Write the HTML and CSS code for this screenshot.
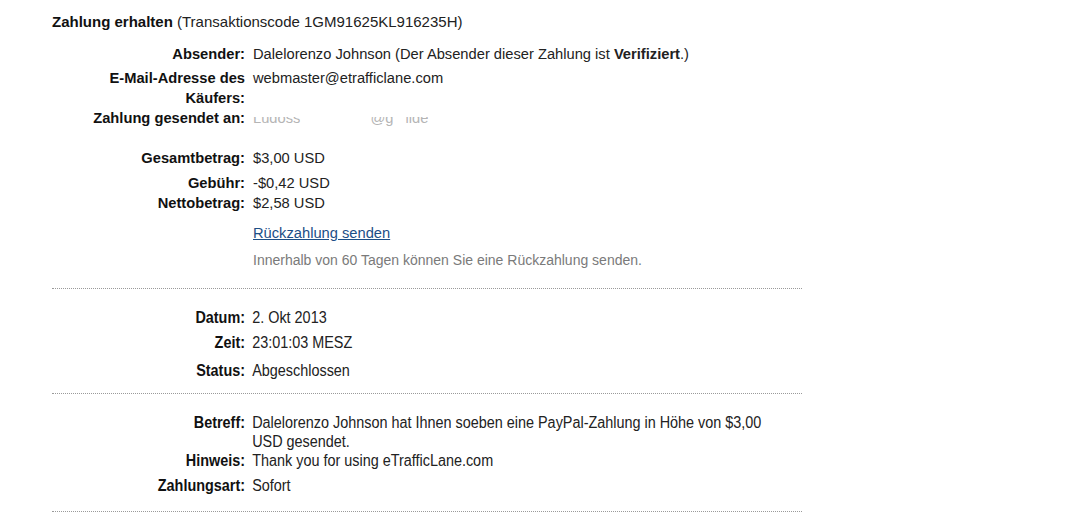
FILE: index.html
```html
<!DOCTYPE html>
<html lang="de">
<head>
  <meta charset="UTF-8" />
  <title>Zahlung erhalten</title>
  <link rel="stylesheet" href="styles.css">
</head>
<body>
  <div class="details">
    <h1 class="title"><strong>Zahlung erhalten</strong> (Transaktionscode 1GM91625KL916235H)</h1>

    <div class="section first">
      <div class="row">
        <div class="label">Absender:</div>
        <div class="value">Dalelorenzo Johnson (Der Absender dieser Zahlung ist <strong>Verifiziert</strong>.)</div>
      </div>
      <div class="row">
        <div class="label">E-Mail-Adresse des Käufers:</div>
        <div class="value">webmaster@etrafficlane.com</div>
      </div>
      <div class="row tight">
        <div class="label">Zahlung gesendet an:</div>
        <div class="value hidden-mail"><span class="smudge">Ludoss</span><span class="smudge gap">@g</span><span class="smudge">ilde</span></div>
      </div>
      <div class="row spaced">
        <div class="label">Gesamtbetrag:</div>
        <div class="value">$3,00 USD</div>
      </div>
      <div class="row fee">
        <div class="label">Gebühr:</div>
        <div class="value">-$0,42 USD</div>
      </div>
      <div class="row tight">
        <div class="label">Nettobetrag:</div>
        <div class="value">$2,58 USD</div>
      </div>
      <div class="row refund">
        <div class="label"></div>
        <div class="value"><a href="#">Rückzahlung senden</a></div>
      </div>
      <div class="row note">
        <div class="label"></div>
        <div class="value muted">Innerhalb von 60 Tagen können Sie eine Rückzahlung senden.</div>
      </div>
    </div>

    <div class="section narrow status">
      <div class="row">
        <div class="label">Datum:</div>
        <div class="value">2. Okt 2013</div>
      </div>
      <div class="row time">
        <div class="label">Zeit:</div>
        <div class="value">23:01:03 MESZ</div>
      </div>
      <div class="row loose">
        <div class="label">Status:</div>
        <div class="value">Abgeschlossen</div>
      </div>
    </div>

    <div class="section narrow message">
      <div class="row">
        <div class="label">Betreff:</div>
        <div class="value">Dalelorenzo Johnson hat Ihnen soeben eine PayPal-Zahlung in Höhe von $3,00 USD gesendet.</div>
      </div>
      <div class="row tight">
        <div class="label">Hinweis:</div>
        <div class="value">Thank you for using eTrafficLane.com</div>
      </div>
      <div class="row method">
        <div class="label">Zahlungsart:</div>
        <div class="value">Sofort</div>
      </div>
    </div>
  </div>
</body>
</html>
```

FILE: styles.css
```css
body {
  margin: 0;
  background: #fff;
  color: #222;
  font-family: "Liberation Sans", Arial, sans-serif;
  font-size: 14.7px;
}

.details {
  width: 750px;
  padding: 12px 0 0 52px;
}

.title {
  margin: 0;
  font-size: 15px;
  font-weight: normal;
  line-height: 20px;
  color: #222;
}
.title strong {
  color: #111;
}

.section {
  border-bottom: 1px dotted #9a9a9a;
}
.section.first {
  padding: 12px 0 18px;
}
.section.status {
  padding: 19px 0 13px;
}
.section.message {
  padding: 19px 0 16px;
}

.row {
  display: flex;
  margin-top: 4px;
  line-height: 20px;
}
.row:first-child {
  margin-top: 0;
}
.row.tight { margin-top: 0; }
.row.spaced { margin-top: 20px; }
.row.fee { margin-top: 5px; }
.row.refund { margin-top: 10px; }
.row.note { margin-top: 7px; }
.row.time { margin-top: 6px; }
.row.loose { margin-top: 9px; }
.row.method { margin-top: 6px; }

.label {
  width: 158px;
  margin-left: 35px;
  flex-shrink: 0;
  text-align: right;
  font-weight: bold;
  color: #111;
}
.value {
  padding-left: 8px;
  width: 520px;
  flex-shrink: 0;
}

.value a {
  color: #1c4e86;
  text-decoration: underline;
}
.muted {
  color: #7a7a7a;
  font-size: 14px;
}

.hidden-mail {
  color: #b5b5b5;
}
.smudge {
  display: inline-block;
  clip-path: inset(45% 0 0 0);
}
.smudge.gap {
  margin-left: 70px;
  margin-right: 12px;
}

/* lower blocks are printed in a condensed face */
.narrow {
  font-size: 16px;
}
.narrow .row {
  line-height: 19px;
  transform: scaleX(0.9);
  transform-origin: 193px 0;
}
.narrow .value {
  width: 590px;
}
```
